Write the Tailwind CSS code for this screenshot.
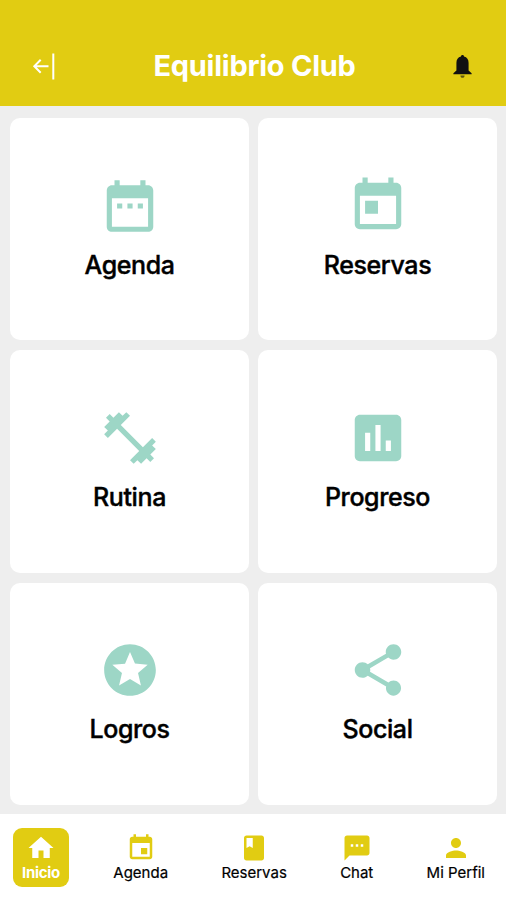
<!DOCTYPE html>
<html lang="es">
<head>
    <meta charset="UTF-8">
    <meta name="viewport" content="width=device-width, initial-scale=1.0">
    <title>Equilibrio Club</title>
    <script src="https://cdn.jsdelivr.net/npm/@tailwindcss/browser@4"></script>
</head>
<body class="bg-[#eeeeee] font-['Inter',sans-serif] text-black">
    <div class="w-[506px] h-[900px] flex flex-col overflow-hidden">
        <!-- Header -->
        <header class="h-[106px] shrink-0 bg-[#e1cc12] flex items-center justify-between pl-8 pr-[34px] pt-[26px]">
            <a href="#" title="Salir" class="w-6 text-white">
                <svg class="w-6 h-7" viewBox="0 0 24 28" fill="none" stroke="currentColor" stroke-width="2">
                    <path d="M16.500 14.300H2.500M8.700 7.800 2.300 14.300l6.400 6.500M21.300 1.500v26"/>
                </svg>
            </a>
            <h1 class="text-[29px] leading-9 font-bold tracking-[-0.25px] text-white">Equilibrio Club</h1>
            <button title="Notificaciones" class="w-[19px]">
                <svg class="w-[19px] h-[25px]" viewBox="0 0 20 26" fill="#111">
                    <path d="M10 1c-1 0-1.600.6-1.600 1.600C5.200 3.400 3.600 6 3.600 9v8.200L.4 20v1.200h19.200V20l-3.200-2.800V9c0-3-1.600-5.600-4.800-6.400C11.600 1.600 11 1 10 1z"/>
                    <path d="M7.800 22.500h4.400c0 1.500-.9 2.400-2.200 2.400s-2.200-.9-2.200-2.400z" fill="#5f570f"/>
                </svg>
            </button>
        </header>

        <!-- Menu -->
        <main class="flex-1 grid grid-cols-2 grid-rows-3 gap-x-[9px] gap-y-[10px] pt-3 pb-[9px] pl-[10px] pr-[9px] text-[25px] leading-9 font-medium tracking-[-0.4px]">
            <a href="#" class="bg-white rounded-[10px] flex flex-col items-center justify-center gap-[10px]">
                <svg class="w-[62px] h-[62px] fill-[#9dd6c6]" viewBox="0 0 24 24"><path d="M9 11H7v2h2v-2zm4 0h-2v2h2v-2zm4 0h-2v2h2v-2zm2-7h-1V2h-2v2H8V2H6v2H5c-1.110 0-1.990.9-1.990 2L3 20c0 1.100.89 2 2 2h14c1.100 0 2-.9 2-2V6c0-1.100-.9-2-2-2zm0 16H5V9h14v11z"/></svg>
                <span class="[-webkit-text-stroke:0.4px]">Agenda</span>
            </a>
            <a href="#" class="bg-white rounded-[10px] flex flex-col items-center justify-center gap-[10px]">
                <svg class="w-[62px] h-[62px] fill-[#9dd6c6]" viewBox="0 0 24 24"><path d="M19 3h-1V1h-2v2H8V1H6v2H5c-1.110 0-1.990.9-1.990 2L3 19c0 1.100.89 2 2 2h14c1.100 0 2-.9 2-2V5c0-1.100-.9-2-2-2zm0 16H5V8h14v11zM7 10h5v5H7z"/></svg>
                <span class="[-webkit-text-stroke:0.4px]">Reservas</span>
            </a>
            <a href="#" class="bg-white rounded-[10px] flex flex-col items-center justify-center gap-[10px]">
                <svg class="w-[62px] h-[62px] fill-[#9dd6c6]" viewBox="0 0 24 24"><path d="M20.570 14.860L22 13.430 20.570 12 17 15.570 8.430 7 12 3.430 10.570 2 9.140 3.430 7.710 2 5.570 4.140 4.140 2.710 2.710 4.140l1.430 1.430L2 7.710l1.430 1.430L2 10.570 3.430 12 7 8.430 15.570 17 12 20.570 13.430 22l1.430-1.430L16.290 22l2.140-2.140 1.430 1.430 1.430-1.430-1.430-1.430L22 16.290z"/></svg>
                <span class="[-webkit-text-stroke:0.4px]">Rutina</span>
            </a>
            <a href="#" class="bg-white rounded-[10px] flex flex-col items-center justify-center gap-[10px]">
                <svg class="w-[62px] h-[62px] fill-[#9dd6c6]" viewBox="0 0 24 24"><path d="M19 3H5c-1.100 0-2 .9-2 2v14c0 1.100.9 2 2 2h14c1.100 0 2-.9 2-2V5c0-1.100-.9-2-2-2zM9 17H7v-7h2v7zm4 0h-2V7h2v10zm4 0h-2v-4h2v4z"/></svg>
                <span class="[-webkit-text-stroke:0.4px]">Progreso</span>
            </a>
            <a href="#" class="bg-white rounded-[10px] flex flex-col items-center justify-center gap-[10px] pb-px">
                <svg class="w-[62px] h-[62px] fill-[#9dd6c6]" viewBox="0 0 24 24"><path d="M11.990 2C6.470 2 2 6.480 2 12s4.470 10 9.990 10C17.520 22 22 17.520 22 12S17.520 2 11.990 2zm4.240 16L12 15.450 7.770 18l1.120-4.810-3.730-3.230 4.920-.42L12 5l1.920 4.530 4.920.42-3.730 3.230L16.230 18z"/></svg>
                <span class="[-webkit-text-stroke:0.4px]">Logros</span>
            </a>
            <a href="#" class="bg-white rounded-[10px] flex flex-col items-center justify-center gap-[10px] pb-px">
                <svg class="w-[62px] h-[62px] fill-[#9dd6c6]" viewBox="0 0 24 24"><path d="M18 16.080c-.76 0-1.440.3-1.960.77L8.910 12.700c.05-.23.09-.46.09-.7s-.04-.47-.09-.7l7.050-4.110c.54.5 1.250.81 2.040.81 1.660 0 3-1.340 3-3s-1.340-3-3-3-3 1.340-3 3c0 .24.04.47.09.7L8.040 9.810C7.500 9.310 6.790 9 6 9c-1.660 0-3 1.340-3 3s1.340 3 3 3c.79 0 1.500-.31 2.040-.81l7.120 4.160c-.05.21-.08.43-.08.65 0 1.610 1.310 2.920 2.920 2.920s2.920-1.310 2.920-2.920-1.310-2.920-2.920-2.920z"/></svg>
                <span class="[-webkit-text-stroke:0.4px]">Social</span>
            </a>
        </main>

        <!-- Bottom bar -->
        <nav class="h-[86px] shrink-0 bg-white flex items-start justify-between pt-[14px] pl-[13px] pr-3 text-[15px] leading-[18px]">
            <a href="#" class="w-14 h-[59px] pt-[5px] rounded-[9px] bg-[#e1cc12] text-white font-bold tracking-[-0.3px] flex flex-col items-center">
                <svg class="w-[30px] h-[30px] fill-white" viewBox="0 0 24 24"><path d="M10 20v-6h4v6h5v-8h3L12 3 2 12h3v8z"/></svg>
                <span class="mt-px">Inicio</span>
            </a>
            <a href="#" class="px-[9px] pt-[5px] flex flex-col items-center">
                <svg class="w-[30px] h-[30px] fill-[#e1cc12]" viewBox="0 0 24 24"><path d="M17 12h-5v5h5v-5zM16 1v2H8V1H6v2H5c-1.110 0-1.990.9-1.990 2L3 19c0 1.100.89 2 2 2h14c1.100 0 2-.9 2-2V5c0-1.100-.9-2-2-2h-1V1h-2zm3 18H5V8h14v11z"/></svg>
                <span class="mt-px [-webkit-text-stroke:0.2px]">Agenda</span>
            </a>
            <a href="#" class="px-[9px] pt-[5px] flex flex-col items-center">
                <svg class="w-[30px] h-[30px] fill-[#e1cc12]" viewBox="0 0 24 24"><path d="M18 2H6c-1.100 0-2 .9-2 2v16c0 1.100.9 2 2 2h12c1.100 0 2-.9 2-2V4c0-1.100-.9-2-2-2zM6 4h5v8l-2.500-1.500L6 12V4z"/></svg>
                <span class="mt-px [-webkit-text-stroke:0.2px]">Reservas</span>
            </a>
            <a href="#" class="px-[9px] pt-[5px] flex flex-col items-center">
                <svg class="w-[30px] h-[30px] fill-[#e1cc12]" viewBox="0 0 24 24"><path d="M20 2H4c-1.100 0-1.990.9-1.990 2L2 22l4-4h14c1.100 0 2-.9 2-2V4c0-1.100-.9-2-2-2zM9 11H7V9h2v2zm4 0h-2V9h2v2zm4 0h-2V9h2v2z"/></svg>
                <span class="mt-px [-webkit-text-stroke:0.2px]">Chat</span>
            </a>
            <a href="#" class="px-[9px] pt-[5px] flex flex-col items-center">
                <svg class="w-[30px] h-[30px] fill-[#e1cc12]" viewBox="0 0 24 24"><path d="M12 12c2.210 0 4-1.790 4-4s-1.790-4-4-4-4 1.790-4 4 1.790 4 4 4zm0 2c-2.670 0-8 1.340-8 4v2h16v-2c0-2.660-5.330-4-8-4z"/></svg>
                <span class="mt-px [-webkit-text-stroke:0.2px]">Mi Perfil</span>
            </a>
        </nav>
    </div>
</body>
</html>
